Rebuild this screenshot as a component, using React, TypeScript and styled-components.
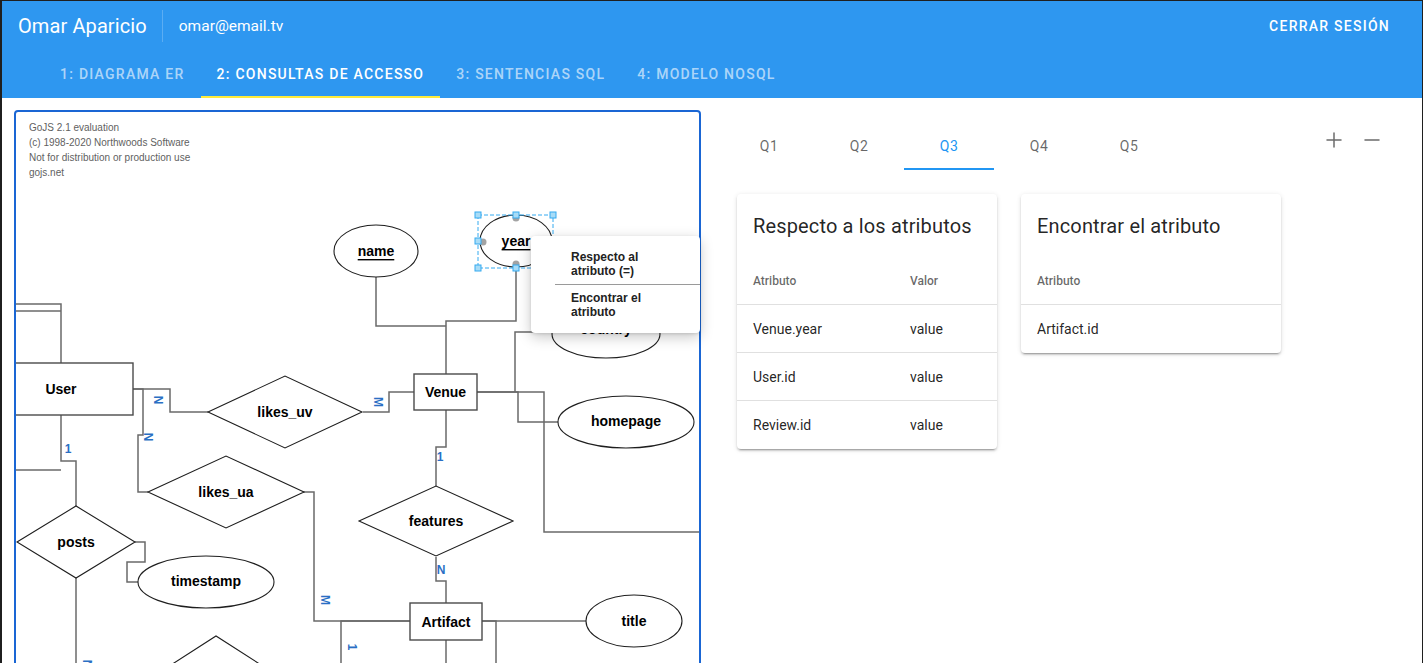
import React from 'react';
import styled, { createGlobalStyle } from 'styled-components';
import { Plus, Minus } from 'lucide-react';

const GlobalStyle = createGlobalStyle`
  html, body { margin: 0; height: 100%; background: #1f1f1f; overflow: hidden; }
  #root { height: 100%; }
  * { box-sizing: border-box; }
`;

const Frame = styled.div`
  height: 100vh;
  background: #fff;
  border-top: 1px solid #1f1f1f;
  border-left: 2px solid #1f1f1f;
  border-right: 1px solid #1f1f1f;
  overflow: hidden;
  font-family: Roboto, "Liberation Sans", sans-serif;
`;

const AppBar = styled.header`
  background: #2e97f0;
  color: #fff;
`;

const Toolbar = styled.div`
  height: 49px;
  display: flex;
  align-items: center;
  padding: 0 16px;
`;

const UserName = styled.span`
  font-size: 20px;
  font-weight: 400;
  letter-spacing: 0.1px;
`;

const VDivider = styled.span`
  width: 1px;
  height: 32px;
  background: rgba(255, 255, 255, 0.22);
  margin: 0 16px 0 15px;
`;

const Email = styled.span`
  font-size: 15.5px;
`;

const Spacer = styled.span`
  flex: 1;
`;

const LogoutButton = styled.button`
  background: none;
  border: 0;
  color: #fff;
  font-family: Roboto, sans-serif;
  font-size: 14px;
  font-weight: 500;
  letter-spacing: 1.25px;
  text-transform: uppercase;
  padding: 6px 0;
  margin-right: 16px;
  cursor: pointer;
`;

const NavTabs = styled.nav`
  height: 48px;
  display: flex;
  padding-left: 42px;
`;

const NavTab = styled.div<{ $active?: boolean }>`
  position: relative;
  display: flex;
  align-items: center;
  padding: 0 16px;
  font-size: 14px;
  font-weight: 500;
  letter-spacing: 1.25px;
  text-transform: uppercase;
  color: ${({ $active }) => ($active ? '#fff' : 'rgba(255,255,255,0.62)')};
  &::after {
    content: '';
    position: absolute;
    left: 0;
    right: 0;
    bottom: 0;
    height: 2px;
    background: ${({ $active }) => ($active ? '#ffeb3b' : 'transparent')};
  }
`;

const Main = styled.main`
  display: flex;
  align-items: flex-start;
  padding: 12px 0 0 12px;
`;

const DiagramPanel = styled.section`
  position: relative;
  flex: none;
  width: 687px;
  height: 600px;
  border: 2px solid #1a66d4;
  border-radius: 4px 4px 0 0;
`;

const DiagramSvg = styled.svg`
  display: block;
  font-family: "Liberation Sans", Arial, sans-serif;
`;

const ContextMenu = styled.div`
  position: absolute;
  left: 515px;
  top: 124px;
  width: 169px;
  padding: 8px 0;
  background: #fff;
  border-radius: 4px;
  box-shadow: 0 4px 14px rgba(0, 0, 0, 0.22), 0 1px 3px rgba(0, 0, 0, 0.12);
  font-family: "Liberation Sans", Arial, sans-serif;
`;

const MenuItem = styled.div`
  padding: 6px 8px 6px 40px;
  font-size: 12px;
  font-weight: 700;
  line-height: 14px;
  color: #222;
`;

const MenuDivider = styled.div`
  height: 1px;
  margin-left: 24px;
  background: #9a9a9a;
`;

const QueryPane = styled.section`
  flex: 1;
  margin-left: 23px;
`;

const QueryBar = styled.div`
  display: flex;
  height: 48px;
  margin-top: 12px;
`;

const QueryTab = styled.div<{ $active?: boolean }>`
  position: relative;
  width: 90px;
  display: flex;
  align-items: center;
  justify-content: center;
  font-size: 14px;
  letter-spacing: 0.5px;
  color: ${({ $active }) => ($active ? '#2196f3' : 'rgba(0,0,0,0.6)')};
  &::after {
    content: '';
    position: absolute;
    left: 0;
    right: 0;
    bottom: 0;
    height: 2px;
    background: ${({ $active }) => ($active ? '#2196f3' : 'transparent')};
  }
`;

const ZoomControls = styled.div`
  margin-left: auto;
  margin-right: 38px;
  margin-top: 6px;
  display: flex;
  gap: 14px;
  align-self: flex-start;
  color: #6b6b6b;
`;

const IconButton = styled.button`
  width: 24px;
  height: 24px;
  padding: 0;
  border: 0;
  background: none;
  color: inherit;
  display: flex;
  cursor: pointer;
`;

const Cards = styled.div`
  display: flex;
  align-items: flex-start;
  gap: 24px;
  margin-top: 24px;
  padding-left: 13px;
`;

const Card = styled.div`
  width: 260px;
  background: #fff;
  border-radius: 4px;
  box-shadow: 0 3px 1px -2px rgba(0, 0, 0, 0.2), 0 2px 2px 0 rgba(0, 0, 0, 0.14), 0 1px 5px 0 rgba(0, 0, 0, 0.12);
`;

const CardTitle = styled.h2`
  margin: 0;
  padding: 16px 16px 15px;
  font-size: 20px;
  line-height: 32px;
  font-weight: 400;
  letter-spacing: 0.15px;
  color: rgba(0, 0, 0, 0.87);
`;

const Row = styled.div<{ $head?: boolean }>`
  display: grid;
  grid-template-columns: 157px 1fr;
  height: 48px;
  align-items: center;
  border-bottom: 1px solid #e0e0e0;
  font-size: ${({ $head }) => ($head ? '12px' : '14px')};
  font-weight: ${({ $head }) => ($head ? 500 : 400)};
  color: ${({ $head }) => ($head ? 'rgba(0,0,0,0.6)' : 'rgba(0,0,0,0.87)')};
  &:last-child { border-bottom: 0; }
`;

const Cell = styled.span`
  padding-left: 16px;
`;

type Pt = [number, number];

const LINKS: Pt[][] = [
  [[376, 277], [376, 326], [446, 326]],
  [[516, 268], [516, 321], [446, 321], [446, 374]],
  [[515, 392], [515, 332], [552, 332]],
  [[477, 392], [518, 392], [518, 422], [558, 422]],
  [[477, 392], [544, 392], [544, 532], [700, 532]],
  [[446, 410], [446, 447], [436, 447], [436, 486]],
  [[436, 557], [436, 581], [446, 581], [446, 603]],
  [[363, 412], [389, 412], [389, 392], [414, 392]],
  [[133, 389], [170, 389], [170, 412], [208, 412]],
  [[133, 389], [143, 389], [143, 435], [138, 435], [138, 492], [148, 492]],
  [[303, 492], [314, 492], [314, 621], [410, 621]],
  [[482, 621], [586, 621]],
  [[482, 621], [496, 621], [496, 720]],
  [[410, 621], [341, 621], [341, 720]],
  [[446, 640], [446, 720]],
  [[10, 304], [61, 304], [61, 363]],
  [[10, 311], [61, 311]],
  [[61, 415], [61, 461], [76, 461], [76, 506]],
  [[10, 470], [61, 470]],
  [[135, 542], [145, 542], [145, 562], [127, 562], [127, 582], [138, 582]],
  [[76, 578], [76, 720]],
];

const ENTITIES = [
  { label: 'User', x: -11, y: 363, w: 144, h: 52 },
  { label: 'Venue', x: 414, y: 374, w: 63, h: 36 },
  { label: 'Artifact', x: 410, y: 603, w: 72, h: 37 },
];

const RELATIONS = [
  { label: 'likes_uv', cx: 285, cy: 412, hw: 77, hh: 36 },
  { label: 'likes_ua', cx: 226, cy: 492, hw: 78, hh: 36 },
  { label: 'features', cx: 436, cy: 521, hw: 77, hh: 35 },
  { label: 'posts', cx: 76, cy: 542, hw: 59, hh: 36 },
  { label: '', cx: 216, cy: 672, hw: 56, hh: 36 },
];

const ATTRIBUTES = [
  { label: 'name', cx: 376, cy: 251, rx: 42, ry: 26, ty: 251, key: true },
  { label: 'year', cx: 516, cy: 241, rx: 36, ry: 26, ty: 241, key: true },
  { label: 'country', cx: 606, cy: 334, rx: 54, ry: 24, ty: 329 },
  { label: 'homepage', cx: 626, cy: 422, rx: 68, ry: 26, ty: 421 },
  { label: 'timestamp', cx: 206, cy: 582, rx: 68, ry: 26, ty: 581 },
  { label: 'title', cx: 634, cy: 621, rx: 48, ry: 26, ty: 621 },
];

const CARDINALITY = [
  { text: 'N', x: 158, y: 400, turned: true },
  { text: 'N', x: 148, y: 437, turned: true },
  { text: '1', x: 68, y: 449 },
  { text: 'M', x: 378, y: 402, turned: true },
  { text: '1', x: 440, y: 457 },
  { text: 'N', x: 441, y: 570 },
  { text: 'M', x: 325, y: 600, turned: true },
  { text: '1', x: 352, y: 647, turned: true },
  { text: 'N', x: 87, y: 664, turned: true },
];

const WATERMARK = [
  'GoJS 2.1 evaluation',
  '(c) 1998-2020 Northwoods Software',
  'Not for distribution or production use',
  'gojs.net',
];

const HANDLES: Pt[] = [[478, 215], [516, 215], [553, 215], [478, 241], [478, 268], [516, 268]];

function ErDiagram() {
  return (
    <DiagramSvg width={683} height={596} viewBox="16 112 683 596">
      {WATERMARK.map((line, i) => (
        <text key={line} x={29} y={131 + i * 15} fontSize={10} fill="#5f5f5f">{line}</text>
      ))}
      {LINKS.map((pts, i) => (
        <polyline key={i} points={pts.map((p) => p.join(',')).join(' ')} fill="none" stroke="#6a6a6a" strokeWidth={1.5} />
      ))}
      {ENTITIES.map((e) => (
        <g key={e.label}>
          <rect x={e.x} y={e.y} width={e.w} height={e.h} fill="#fff" stroke="#4a4a4a" strokeWidth={1.4} />
          <text x={e.x + e.w / 2} y={e.y + e.h / 2} textAnchor="middle" dominantBaseline="central" fontSize={14} fontWeight={700}>{e.label}</text>
        </g>
      ))}
      {RELATIONS.map((r, i) => (
        <g key={i}>
          <path
            d={`M${r.cx - r.hw},${r.cy} L${r.cx},${r.cy - r.hh} L${r.cx + r.hw},${r.cy} L${r.cx},${r.cy + r.hh} Z`}
            fill="#fff"
            stroke="#1e1e1e"
            strokeWidth={1.1}
          />
          <text x={r.cx} y={r.cy} textAnchor="middle" dominantBaseline="central" fontSize={14} fontWeight={700}>{r.label}</text>
        </g>
      ))}
      {ATTRIBUTES.map((a) => (
        <g key={a.label}>
          <ellipse cx={a.cx} cy={a.cy} rx={a.rx} ry={a.ry} fill="#fff" stroke="#1e1e1e" strokeWidth={1.1} />
          <text
            x={a.cx}
            y={a.ty}
            textAnchor="middle"
            dominantBaseline="central"
            fontSize={14}
            fontWeight={700}
            textDecoration={a.key ? 'underline' : undefined}
          >
            {a.label}
          </text>
        </g>
      ))}
      {CARDINALITY.map((c, i) => (
        <text
          key={i}
          x={c.x}
          y={c.y}
          textAnchor="middle"
          dominantBaseline="central"
          fontSize={12}
          fontWeight={700}
          fill="#2a6fc4"
          transform={c.turned ? `rotate(90 ${c.x} ${c.y})` : undefined}
        >
          {c.text}
        </text>
      ))}
      {/* selection adornment on "year" */}
      <circle cx={516} cy={218} r={3.5} fill="#a3a3a3" />
      <circle cx={516} cy={264} r={3.5} fill="#a3a3a3" />
      <circle cx={483} cy={242} r={3.5} fill="#a3a3a3" />
      <rect x={478} y={215} width={75} height={53} fill="none" stroke="#35aaf0" strokeWidth={1} strokeDasharray="4 2" />
      {HANDLES.map(([x, y], i) => (
        <rect key={i} x={x - 3} y={y - 3} width={6} height={6} fill="#a8dcf7" stroke="#35aaf0" strokeWidth={1} />
      ))}
    </DiagramSvg>
  );
}

const NAV = ['1: Diagrama ER', '2: Consultas de accesso', '3: Sentencias SQL', '4: Modelo NoSQL'];
const QUERIES = ['Q1', 'Q2', 'Q3', 'Q4', 'Q5'];

export default function App() {
  return (
    <>
      <GlobalStyle />
      <Frame>
        <AppBar>
          <Toolbar>
            <UserName>Omar Aparicio</UserName>
            <VDivider />
            <Email>omar@email.tv</Email>
            <Spacer />
            <LogoutButton>Cerrar sesión</LogoutButton>
          </Toolbar>
          <NavTabs>
            {NAV.map((t, i) => (
              <NavTab key={t} $active={i === 1}>{t}</NavTab>
            ))}
          </NavTabs>
        </AppBar>
        <Main>
          <DiagramPanel>
            <ErDiagram />
            <ContextMenu>
              <MenuItem>Respecto al<br />atributo (=)</MenuItem>
              <MenuDivider />
              <MenuItem>Encontrar el<br />atributo</MenuItem>
            </ContextMenu>
          </DiagramPanel>
          <QueryPane>
            <QueryBar>
              {QUERIES.map((q) => (
                <QueryTab key={q} $active={q === 'Q3'}>{q}</QueryTab>
              ))}
              <ZoomControls>
                <IconButton aria-label="Acercar"><Plus size={24} strokeWidth={1.5} /></IconButton>
                <IconButton aria-label="Alejar"><Minus size={24} strokeWidth={1.5} /></IconButton>
              </ZoomControls>
            </QueryBar>
            <Cards>
              <Card>
                <CardTitle>Respecto a los atributos</CardTitle>
                <Row $head><Cell>Atributo</Cell><Cell>Valor</Cell></Row>
                <Row><Cell>Venue.year</Cell><Cell>value</Cell></Row>
                <Row><Cell>User.id</Cell><Cell>value</Cell></Row>
                <Row><Cell>Review.id</Cell><Cell>value</Cell></Row>
              </Card>
              <Card>
                <CardTitle>Encontrar el atributo</CardTitle>
                <Row $head><Cell>Atributo</Cell></Row>
                <Row><Cell>Artifact.id</Cell></Row>
              </Card>
            </Cards>
          </QueryPane>
        </Main>
      </Frame>
    </>
  );
}
